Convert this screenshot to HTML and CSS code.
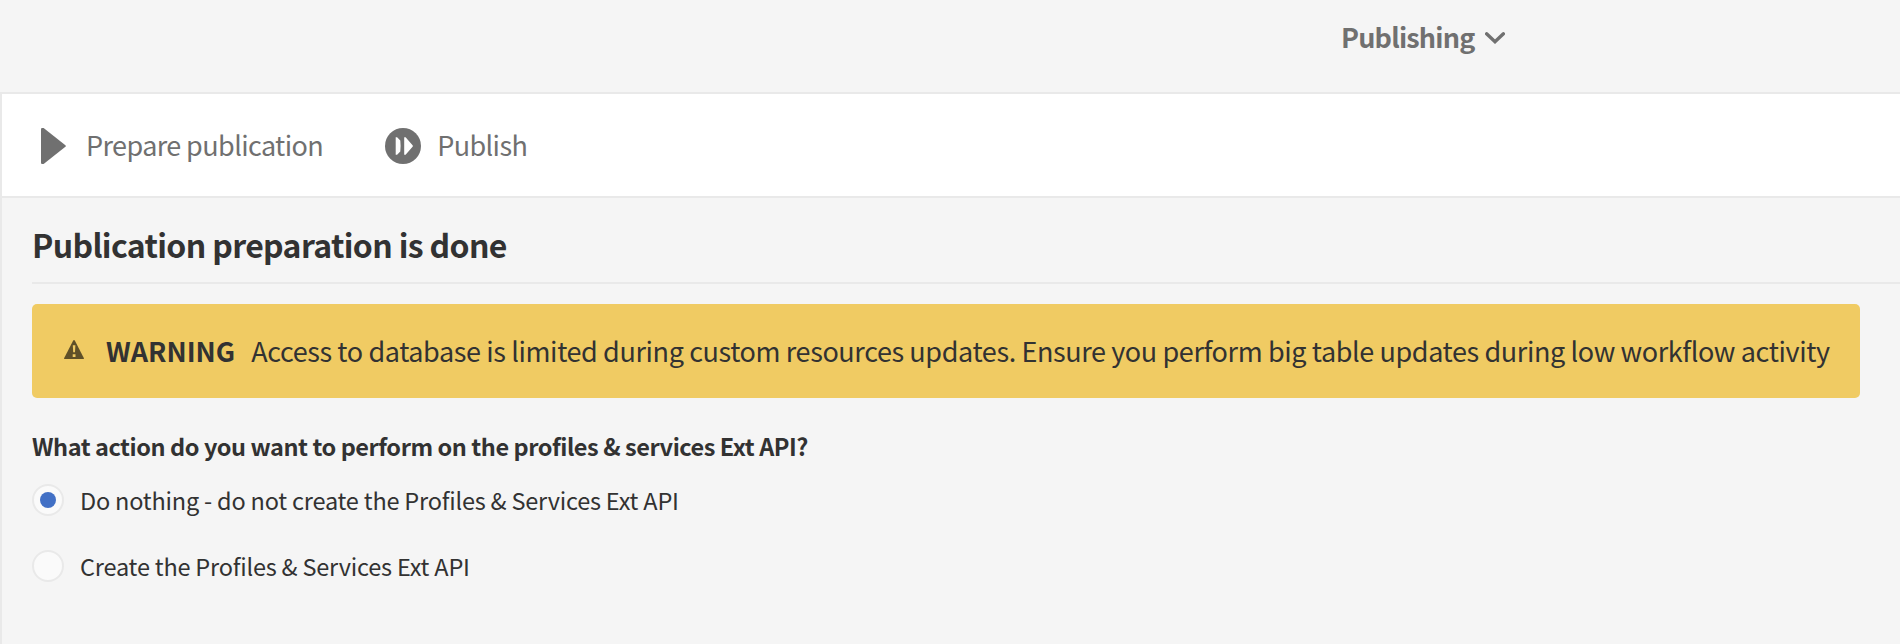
FILE: index.html
```html
<!DOCTYPE html>
<html lang="en">
<head>
<meta charset="utf-8">
<title>Publishing</title>
<link rel="stylesheet" href="styles.css">
</head>
<body>
<header class="topbar">
  <button class="menu"><span>Publishing</span>
    <svg class="chevron" viewBox="0 0 20 12"><path d="M1.6 1.8 10 9.7l8.4-7.9" fill="none" stroke="#707070" stroke-width="3.4" stroke-linecap="round"/></svg>
  </button>
</header>
<main class="panel">
  <nav class="toolbar">
    <button class="action"><svg class="play" viewBox="0 0 25 36"><path d="M0 1.2C0 .4.6 0 1.4 0h1.2L24.4 17.2q.9.8 0 1.6L2.6 36H1.4C.6 36 0 35.6 0 34.8z" fill="#707070"/></svg><span class="label">Prepare publication</span></button>
    <button class="action"><svg class="forward" viewBox="0 0 36 36"><circle cx="18" cy="18" r="18" fill="#707070"/><path d="M10.7 9.2h1.4l3.2 3.4q.6 5.4 0 10.8l-3.2 3.4h-1.4zM19.2 9.2h1.4l7.2 8.3v1l-7.2 8.3h-1.4z" fill="#fff"/></svg><span class="label">Publish</span></button>
  </nav>
  <section class="content">
    <h1 class="title">Publication preparation is done</h1>
    <div class="alert">
      <svg class="warn" viewBox="0 0 20 19"><path d="M9.2.5q.8-1 1.6 0L19.8 18q.4 1-.6 1H.8q-1 0-.6-1z" fill="#5f5028"/><path d="M8.8 5.3h2.6l-.4 6.9H9.2zM8.7 14.3h2.8V17H8.7z" fill="#f0cb63"/></svg>
      <strong class="tag">WARNING</strong><span class="message">Access to database is limited during custom resources updates. Ensure you perform big table updates during low workflow activity</span>
    </div>
    <h2 class="question">What action do you want to perform on the profiles &amp; services Ext API?</h2>
    <div class="options">
      <label class="option"><span class="radio checked"></span><span>Do nothing - do not create the Profiles &amp; Services Ext API</span></label>
      <label class="option"><span class="radio"></span><span>Create the Profiles &amp; Services Ext API</span></label>
    </div>
  </section>
</main>
</body>
</html>
```

FILE: styles.css
```css
* { box-sizing: border-box; }
body { margin: 0; height: 644px; overflow: hidden; background: #f5f5f5; color: #323232; font-family: "Noto Sans CJK SC", "Noto Sans", sans-serif; display: flex; flex-direction: column; }
button { border: 0; padding: 0; background: none; font: inherit; color: #707070; display: flex; align-items: center; }
svg { flex: none; }
.topbar { height: 92px; flex: none; display: flex; align-items: flex-start; padding: 17px 0 0 1341px; }
.menu { font-size: 27px; line-height: 40px; font-weight: 700; gap: 10px; letter-spacing: -.8px; }
.chevron { width: 20px; height: 12px; margin-top: 2px; }
.panel { flex: 1; border-left: 2px solid #e9e9e9; border-top: 2px solid #e9e9e9; }
.toolbar { height: 104px; background: #fff; border-bottom: 2px solid #e9e9e9; display: flex; align-items: center; padding: 2px 0 0 39px; gap: 62px; }
.action { font-size: 27px; line-height: 40px; letter-spacing: -.6px; }
.label { padding-bottom: 2px; }
.play { width: 25px; height: 36px; margin-right: 20px; }
.forward { width: 36px; height: 36px; margin-right: 16px; }
.content { padding-left: 30px; }
.title { margin: 0; height: 86px; padding-top: 22px; border-bottom: 2px solid #e9e9e9; font-size: 32px; line-height: 48px; font-weight: 700; letter-spacing: -.64px; white-space: nowrap; }
.alert { margin-top: 20px; width: 1828px; height: 94px; border-radius: 5px; background: #f0cb63; padding-left: 32px; display: flex; align-items: center; white-space: nowrap; font-size: 27px; line-height: 40px; }
.warn { width: 20px; height: 19px; margin: 0 22px 3px 0; }
.tag { margin-right: 16px; }
.message { letter-spacing: -.39px; }
.question { margin: 30px 0 0; font-size: 23.5px; line-height: 36px; font-weight: 700; letter-spacing: -.44px; white-space: nowrap; }
.options { margin-top: 20px; display: flex; flex-direction: column; gap: 34px; }
.option { display: flex; align-items: center; gap: 16px; height: 32px; font-size: 23.5px; letter-spacing: -.2px; white-space: nowrap; }
.radio { width: 32px; height: 32px; border: 2px solid #e9e9e9; border-radius: 50%; background: #fafafa; display: grid; place-items: center; }
.checked::after { content: ""; width: 16px; height: 16px; border-radius: 50%; background: #4270c5; }
```
